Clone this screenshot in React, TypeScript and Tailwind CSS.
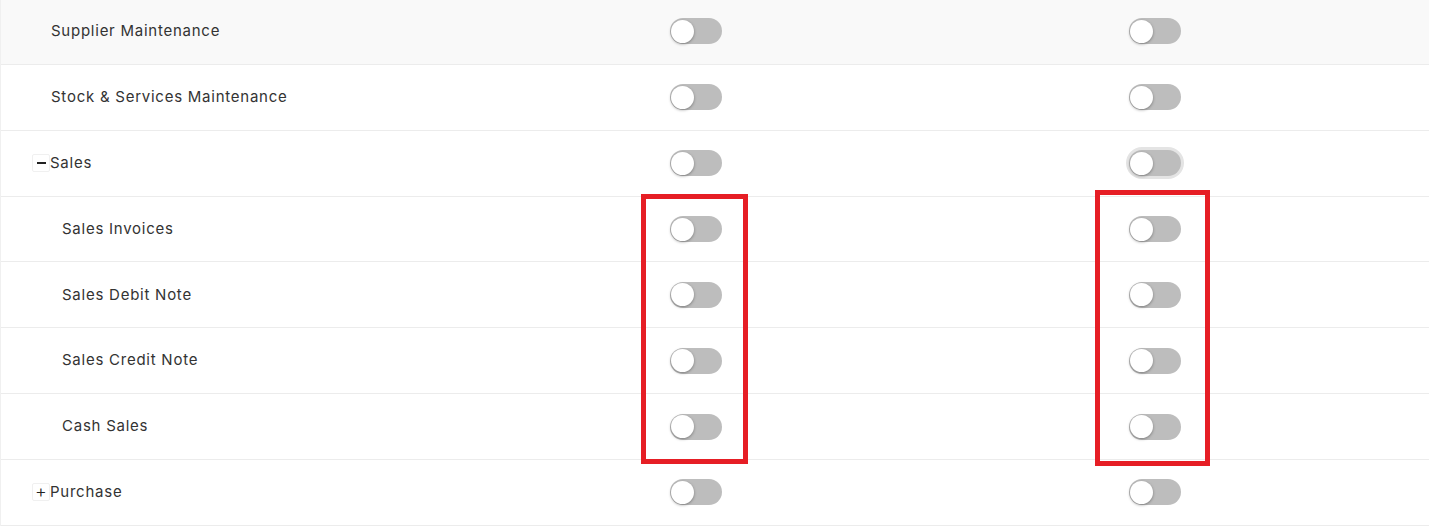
import { useState } from 'react';

type Row = {
  label: string;
  level: 0 | 1;
  expander?: 'open' | 'closed';
};

const rows: Row[] = [
  { label: 'Supplier Maintenance', level: 0 },
  { label: 'Stock & Services Maintenance', level: 0 },
  { label: 'Sales', level: 0, expander: 'open' },
  { label: 'Sales Invoices', level: 1 },
  { label: 'Sales Debit Note', level: 1 },
  { label: 'Sales Credit Note', level: 1 },
  { label: 'Cash Sales', level: 1 },
  { label: 'Purchase', level: 0, expander: 'closed' }
];

function Toggle({ focused }: { focused?: boolean }) {
  const [on, setOn] = useState(false);
  return (
    <button
      onClick={() => setOn(!on)}
      className={`relative w-[52px] h-[26px] rounded-full ${
        on ? 'bg-[#9ec5f0]' : 'bg-[#bdbdbd]'
      } ${focused ? 'shadow-[0_0_0_3px_#e4e4e4]' : ''}`}
    >
      <span
        className={`absolute top-[1.5px] ${
          on ? 'left-[27px]' : 'left-[1px]'
        } w-[23px] h-[23px] rounded-full bg-white shadow-[0_1px_3px_rgba(0,0,0,0.35)]`}
      />
    </button>
  );
}

export default function App() {
  return (
    <div className="relative w-[1429px] h-[526px] overflow-hidden bg-white font-['Inter',sans-serif] text-[15px] tracking-[0.75px] text-[#333]">
      <div className="-mt-px border-l border-[#f0f0f0]">
        {rows.map((row, i) => (
          <div
            key={i}
            className={`grid grid-cols-[463px_464px_454px] items-center h-[65.86px] border-b border-[#ececec] ${
              i === 0 ? 'bg-[#f9f9f9]' : 'bg-white'
            }`}
          >
            <div
              className={`flex items-center ${
                row.level === 1 ? 'pl-[61px]' : row.expander ? 'pl-[31px]' : 'pl-[50px]'
              }`}
            >
              {row.expander && (
                <span className="flex items-center justify-center w-[18px] h-[18px] border border-[#f0f0f0] rounded-[2px] text-[#222] leading-none tracking-normal">
                  {row.expander === 'open' ? (
                    <span className="block w-[9px] h-[2px] bg-[#222]" />
                  ) : (
                    <span className="font-light text-[18px] -mt-px">+</span>
                  )}
                </span>
              )}
              <span>{row.label}</span>
            </div>
            <div className="flex justify-center">
              <Toggle />
            </div>
            <div className="flex justify-center">
              <Toggle focused={i === 2} />
            </div>
          </div>
        ))}
      </div>

      {/* annotation boxes */}
      <div className="absolute left-[641px] top-[194px] w-[107px] h-[270px] border-[5px] border-[#e61e25] pointer-events-none" />
      <div className="absolute left-[1095px] top-[190px] w-[115px] h-[276px] border-[5px] border-[#e61e25] pointer-events-none" />
    </div>
  );
}
